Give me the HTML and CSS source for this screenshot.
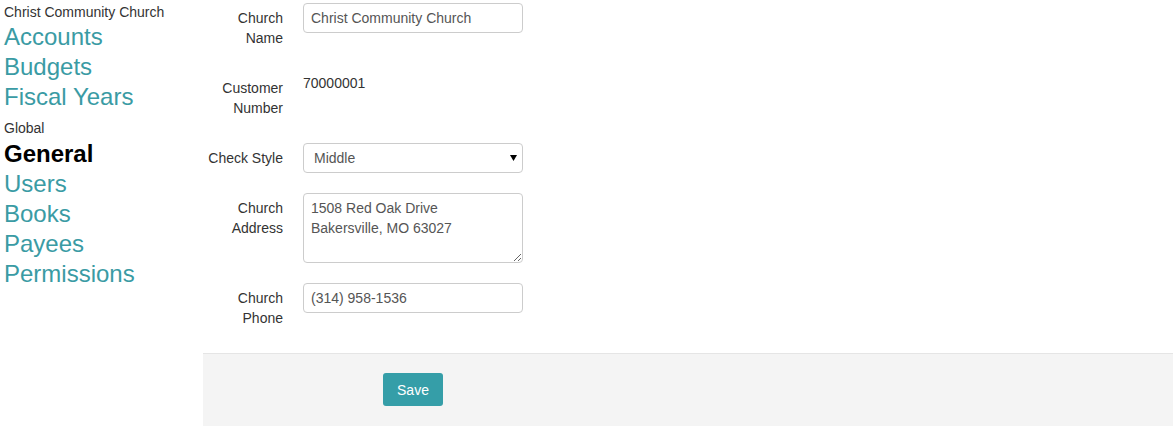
FILE: index.html
```html
<!DOCTYPE html>
<html>
<head>
<meta charset="utf-8">
<link rel="stylesheet" href="styles.css">
</head>
<body>
<div class="page">
  <nav class="sidebar">
    <div class="group-title">Christ Community Church</div>
    <a class="nav-link" href="#">Accounts</a>
    <a class="nav-link" href="#">Budgets</a>
    <a class="nav-link" href="#">Fiscal Years</a>
    <div class="group-title group-gap">Global</div>
    <a class="nav-link active" href="#">General</a>
    <a class="nav-link" href="#">Users</a>
    <a class="nav-link" href="#">Books</a>
    <a class="nav-link" href="#">Payees</a>
    <a class="nav-link" href="#">Permissions</a>
  </nav>
  <main class="main">
    <form class="form">
      <div class="row">
        <label class="label">Church Name</label>
        <div class="control"><input class="input" type="text" value="Christ Community Church"></div>
      </div>
      <div class="row">
        <label class="label">Customer Number</label>
        <div class="control"><div class="static">70000001</div></div>
      </div>
      <div class="row">
        <label class="label">Check Style</label>
        <div class="control select-wrap">
          <select class="input select"><option>Middle</option></select>
          <svg class="caret" width="7" height="6" viewBox="0 0 7 6"><path d="M0 0H7L3.5 6Z" fill="#000"/></svg>
        </div>
      </div>
      <div class="row">
        <label class="label">Church Address</label>
        <div class="control"><textarea class="input textarea">1508 Red Oak Drive
Bakersville, MO 63027</textarea></div>
      </div>
      <div class="row">
        <label class="label">Church Phone</label>
        <div class="control"><input class="input" type="text" value="(314) 958-1536"></div>
      </div>
    </form>
    <div class="footer">
      <button class="btn" type="button">Save</button>
    </div>
  </main>
</div>
</body>
</html>
```

FILE: styles.css
```css
html, body {
  margin: 0;
  padding: 0;
  background: #fff;
}
body {
  font-family: "Liberation Sans", Arial, sans-serif;
  font-size: 14px;
  line-height: 20px;
  color: #333;
}
.page {
  display: flex;
  width: 1174px;
}
.sidebar {
  width: 199px;
  padding: 3px 0 0 4px;
  display: flex;
  flex-direction: column;
  flex: none;
}
.group-title {
  font-size: 14px;
  line-height: 19px;
  color: #333;
}
.group-gap {
  margin-top: 6px;
  line-height: 21px;
}
.nav-link {
  font-size: 24px;
  line-height: 30px;
  color: #3a9ba4;
  text-decoration: none;
}
.nav-link.active {
  color: #000;
  font-weight: bold;
}
.main {
  width: 970px;
  flex: none;
  padding-top: 3px;
}
.form {
  display: flex;
  flex-direction: column;
}
.row {
  display: flex;
  margin-bottom: 20px;
}
.label {
  width: 80px;
  padding: 5px 20px 5px 0;
  text-align: right;
  flex: none;
  color: #333;
}
.control {
  width: 220px;
}
.static {
  line-height: 20px;
  color: #333;
}
.input {
  box-sizing: border-box;
  width: 220px;
  height: 30px;
  margin: 0;
  padding: 4px 7px;
  border: 1px solid #ccc;
  border-radius: 4px;
  font-family: "Liberation Sans", Arial, sans-serif;
  font-size: 14px;
  line-height: 20px;
  color: #555;
  background: #fff;
  outline: none;
}
.select-wrap {
  position: relative;
}
.select {
  -webkit-appearance: none;
  appearance: none;
  padding-left: 10px;
}
.caret {
  position: absolute;
  left: 207px;
  top: 12px;
}
.textarea {
  height: 70px;
  display: block;
  resize: vertical;
  padding-top: 4px;
}
.footer {
  border-top: 1px solid #e5e5e5;
  background: #f4f4f4;
  padding: 19px 0 20px 180px;
  height: 33px;
}
.btn {
  width: 60px;
  height: 33px;
  border: none;
  border-radius: 3px;
  background: #359ea8;
  color: #fff;
  font-family: "Liberation Sans", Arial, sans-serif;
  font-size: 14px;
  padding: 0;
  cursor: pointer;
}
```
